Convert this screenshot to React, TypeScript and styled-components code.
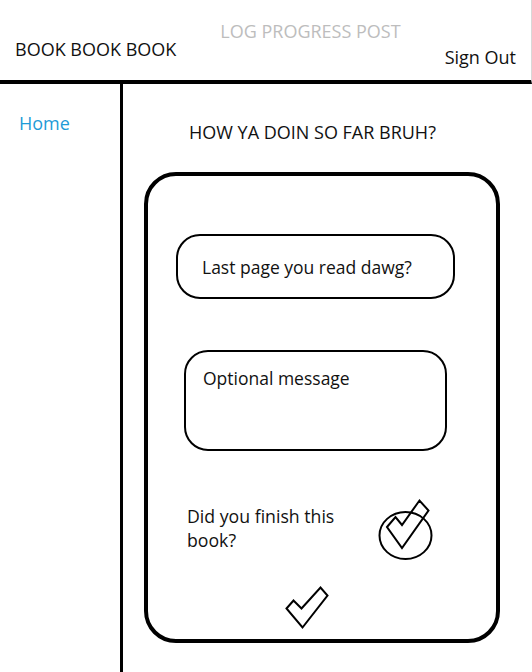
import React from 'react'
import styled, { createGlobalStyle } from 'styled-components'

const GlobalStyle = createGlobalStyle`
	html, body {
		margin: 0;
		padding: 0;
		background: #fff;
	}
	body {
		font-family: "Open Sans", "Noto Sans", sans-serif;
		color: #111;
	}
`

const Page = styled.div`
	width: 532px;
	height: 672px;
	display: grid;
	grid-template-rows: 84px 1fr;
	overflow: hidden;
`

const Header = styled.header`
	box-sizing: border-box;
	height: 84px;
	display: flex;
	align-items: flex-start;
	padding: 0 15px 0 15px;
	border-bottom: 4px solid #000;
	border-right: 1px solid #d8d8d8;
`

const Brand = styled.div`
	margin-top: 37px;
	font-size: 18px;
	line-height: 24px;
	white-space: nowrap;
`

const PageTitle = styled.div`
	margin-top: 19px;
	margin-left: 44px;
	font-size: 18px;
	line-height: 24px;
	color: #bdbdbd;
	white-space: nowrap;
`

const SignOut = styled.div`
	margin-top: 45px;
	margin-left: auto;
	font-size: 18px;
	line-height: 24px;
	white-space: nowrap;
`

const Body = styled.div`
	display: grid;
	grid-template-columns: 123px 1fr;
`

const Sidebar = styled.nav`
	box-sizing: border-box;
	border-right: 3px solid #000;
	padding: 27px 0 0 19px;
`

const NavLink = styled.a`
	font-size: 18px;
	line-height: 24px;
	color: #1e9bd7;
	text-decoration: none;
`

const Main = styled.main`
	display: flex;
	flex-direction: column;
	align-items: flex-start;
	padding: 37px 0 0 21px;
`

const Heading = styled.h1`
	margin: 0 0 0 45px;
	font-size: 18px;
	line-height: 23px;
	font-weight: 400;
	white-space: nowrap;
`

const Card = styled.section`
	box-sizing: border-box;
	width: 356px;
	height: 471px;
	margin-top: 28px;
	border: 4px solid #000;
	border-radius: 32px;
	display: flex;
	flex-direction: column;
	align-items: flex-start;
	padding: 58px 0 0 0;
`

const Field = styled.div<{ $left: number; $width: number; $height: number; $top?: number; $multi?: boolean }>`
	box-sizing: border-box;
	margin-top: ${(p) => p.$top ?? 0}px;
	margin-left: ${(p) => p.$left}px;
	width: ${(p) => p.$width}px;
	height: ${(p) => p.$height}px;
	border: 2px solid #000;
	border-radius: 24px;
	display: flex;
	align-items: ${(p) => (p.$multi ? 'flex-start' : 'center')};
	padding: ${(p) => (p.$multi ? '14px 0 0 17px' : '0 0 0 24px')};
	font-size: 17.5px;
	line-height: 24px;
	white-space: nowrap;
`

const FinishRow = styled.div`
	display: flex;
	align-items: flex-start;
	margin-top: 46px;
	margin-left: 39px;
`

const FinishLabel = styled.div`
	width: 162px;
	margin-top: 7px;
	font-size: 17.7px;
	line-height: 24px;
`

const CircleCheck = styled.svg`
	margin-left: 28px;
	display: block;
`

const SubmitCheck = styled.svg`
	display: block;
	margin-top: 24px;
	margin-left: 136px;
`

export default function App() {
	return (
		<>
			<GlobalStyle />
			<Page>
				<Header>
					<Brand>BOOK BOOK BOOK</Brand>
					<PageTitle>LOG PROGRESS POST</PageTitle>
					<SignOut>Sign Out</SignOut>
				</Header>
				<Body>
					<Sidebar>
						<NavLink href="#">Home</NavLink>
					</Sidebar>
					<Main>
						<Heading>HOW YA DOIN SO FAR BRUH?</Heading>
						<Card>
							<Field $left={28} $width={279} $height={65}>
								Last page you read dawg?
							</Field>
							<Field $left={36} $width={263} $height={101} $top={51} $multi>
								Optional message
							</Field>
							<FinishRow>
								<FinishLabel>Did you finish this book?</FinishLabel>
								<CircleCheck width="56" height="64" viewBox="378 497 56 64">
									<ellipse cx="406.5" cy="535.5" rx="26" ry="23.5" fill="none" stroke="#000" strokeWidth="2" />
									<polygon
										points="388,527 396.5,517 403,525 420.5,500.5 429.5,510.5 403,548"
										fill="none"
										stroke="#000"
										strokeWidth="2"
										strokeLinejoin="miter"
									/>
								</CircleCheck>
							</FinishRow>
							<SubmitCheck width="46" height="45" viewBox="283.5 584.5 46 45">
								<polygon
									points="286,608 293,600 301,608 320,587 327,595 302,627"
									fill="none"
									stroke="#000"
									strokeWidth="2"
								/>
							</SubmitCheck>
						</Card>
					</Main>
				</Body>
			</Page>
		</>
	)
}
